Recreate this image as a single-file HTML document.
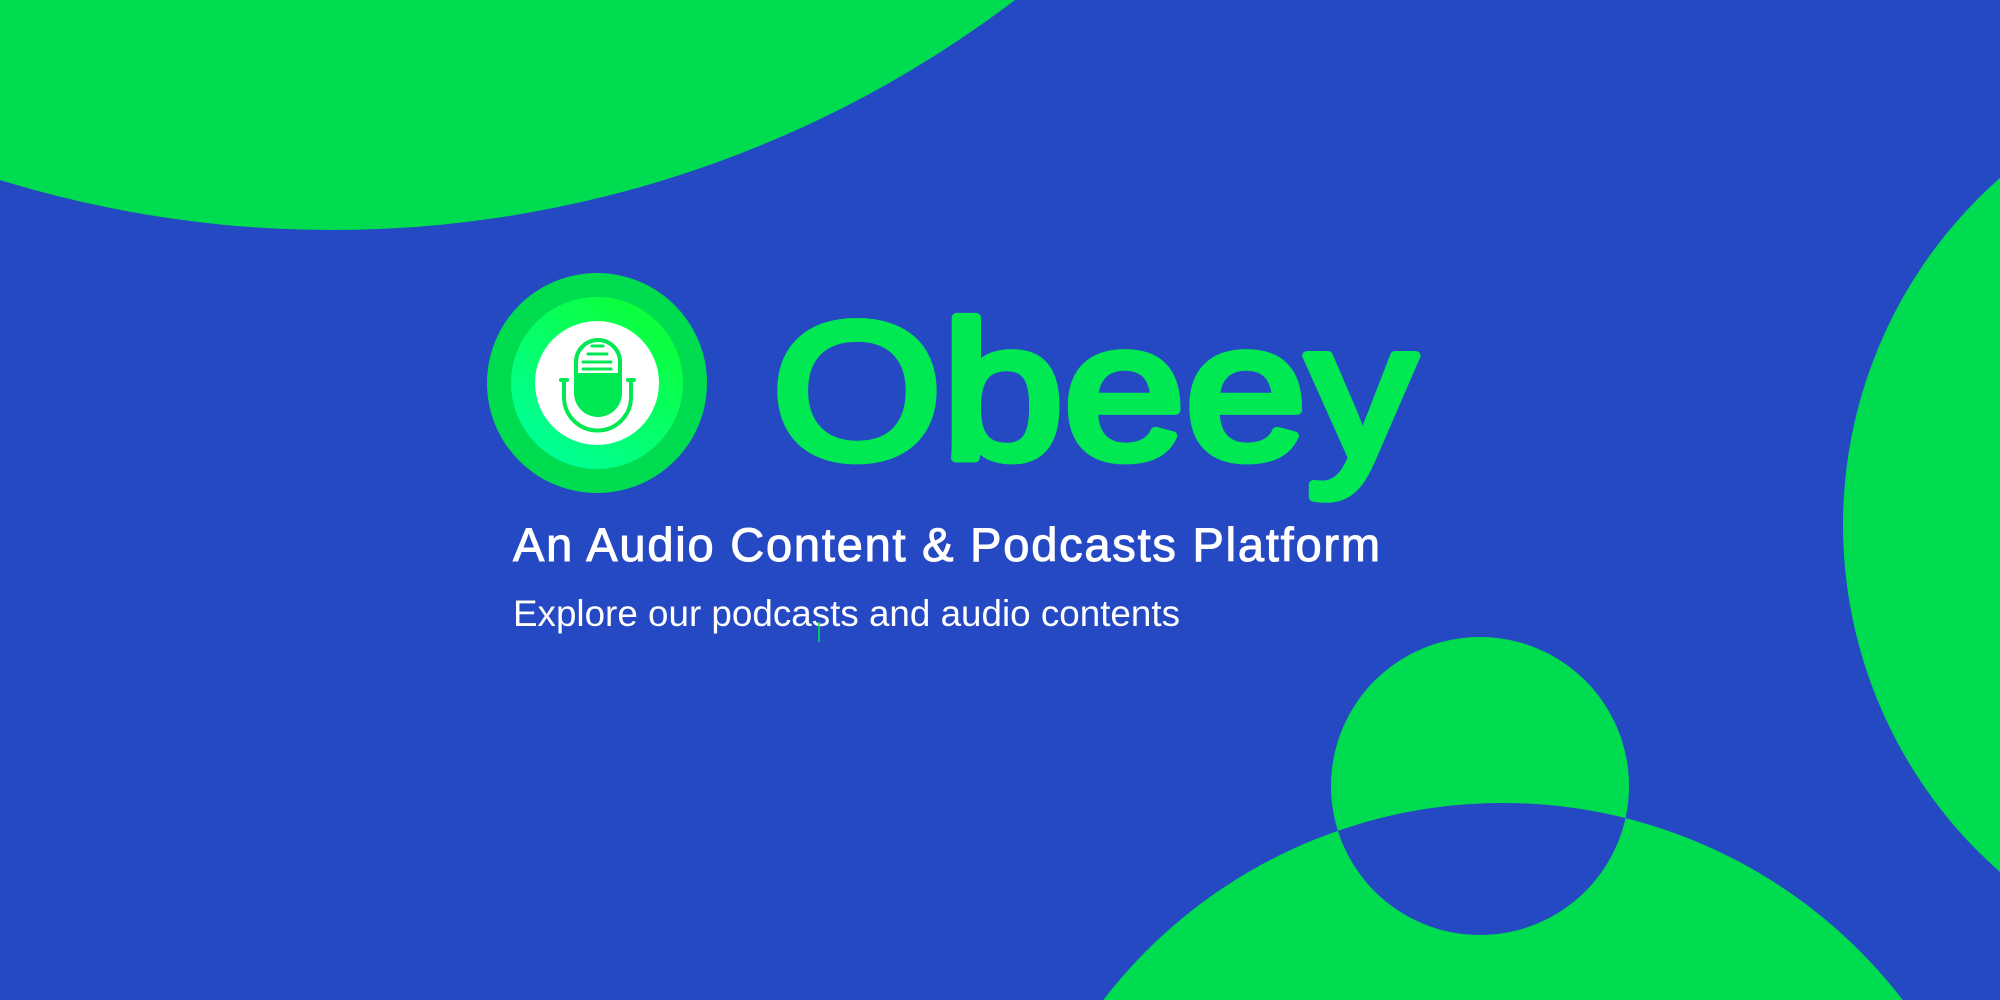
<!DOCTYPE html>
<html><head><meta charset="utf-8"><style>
html,body{margin:0;padding:0;width:2000px;height:1000px;overflow:hidden;background:#2549C2}
svg{display:block;position:absolute;left:0;top:0}
text{font-family:"Liberation Sans",sans-serif}
</style></head><body>
<svg width="2000" height="1000" viewBox="0 0 2000 1000" xmlns="http://www.w3.org/2000/svg">
<defs>
<linearGradient id="g" x1="0.8" y1="0.1" x2="0.2" y2="0.9">
<stop offset="0" stop-color="#0BFF3A"/><stop offset="1" stop-color="#00FF95"/>
</linearGradient>
</defs>
<rect width="2000" height="1000" fill="#2549C2"/>
<circle cx="332" cy="-899" r="1129" fill="#00DC4F"/>
<circle cx="2305" cy="525" r="462" fill="#00DC4F"/>
<path fill="#00DC4F" fill-rule="evenodd" d="M1331,786a149,149 0 1,0 298,0a149,149 0 1,0 -298,0Z M999,1307a504,504 0 1,0 1008,0a504,504 0 1,0 -1008,0Z"/>
<circle cx="597" cy="383" r="110" fill="#00DC4F"/>
<circle cx="597" cy="383" r="86" fill="url(#g)"/>
<circle cx="597" cy="383" r="62" fill="#fff"/>
<path d="M576,375 L576,362 a22,22 0 0,1 44,0 L620,375" fill="none" stroke="#00E952" stroke-width="4"/>
<path d="M574,373 L622,373 L622,393 a24,24 0 0,1 -48,0 Z" fill="#00E952"/>
<g stroke="#00E952" stroke-width="3" stroke-linecap="round">
<line x1="592" y1="346" x2="603" y2="346"/>
<line x1="588" y1="354" x2="607" y2="354"/>
<line x1="583" y1="362" x2="611" y2="362"/>
<line x1="583" y1="369" x2="611" y2="369"/>
</g>
<path d="M564,380 L564,397 a33.5,33.5 0 0,0 67,0 L631,380" fill="none" stroke="#00E952" stroke-width="4"/>
<line x1="561" y1="380" x2="567" y2="380" stroke="#00E952" stroke-width="4" stroke-linecap="round"/>
<line x1="628" y1="380" x2="634" y2="380" stroke="#00E952" stroke-width="4" stroke-linecap="round"/>
<text x="772" y="458" font-size="194" fill="#00E952" stroke="#00E952" stroke-width="9" stroke-linejoin="round" textLength="644" lengthAdjust="spacingAndGlyphs">Obeey</text>
<text x="513" y="561" font-size="47" fill="#fff" stroke="#fff" stroke-width="1" textLength="867" lengthAdjust="spacing">An Audio Content &amp; Podcasts Platform</text>
<text x="513" y="626" font-size="37" fill="#fff" textLength="667" lengthAdjust="spacingAndGlyphs">Explore our podcasts and audio contents</text>
<line x1="819" y1="622" x2="819" y2="642" stroke="#00E952" stroke-width="1.5"/>
</svg>
</body></html>
